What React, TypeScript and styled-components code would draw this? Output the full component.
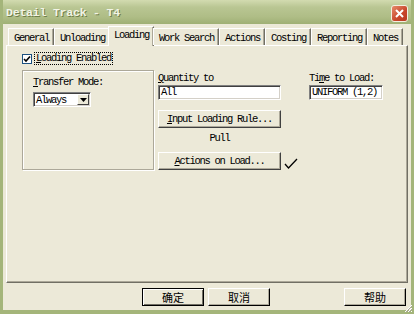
import React from "react";
import styled, { createGlobalStyle } from "styled-components";

const GlobalStyle = createGlobalStyle`
  html, body {
    margin: 0;
    padding: 0;
    background: #ece9d8;
  }
`;

const MONO = `"Liberation Mono", "DejaVu Sans Mono", monospace`;
const CJK = `"Noto Sans CJK SC", "Noto Sans", sans-serif`;

const Window = styled.div`
  width: 414px;
  height: 314px;
  box-sizing: border-box;
  display: flex;
  flex-direction: column;
  background: #ece9d8;
  border-left: 3px solid #a4b57a;
  border-right: 3px solid #a4b57a;
  border-bottom: 4px solid #a4b57a;
  font-family: ${MONO};
  font-size: 10.5px;
  letter-spacing: -1.3px;
  color: #000;
  overflow: hidden;
`;

const TitleBar = styled.div`
  height: 24px;
  margin: 0 -3px;
  padding: 0 6px 0 6px;
  display: flex;
  align-items: center;
  justify-content: space-between;
  background: linear-gradient(#d2dbb0 0%, #b9c693 30%, #afbd86 70%, #9fb075 100%);
`;

const Title = styled.span`
  font-family: ${MONO};
  font-weight: bold;
  font-size: 11.5px;
  letter-spacing: -0.2px;
  color: #f2f4e6;
  text-shadow: 1px 1px 0 #6f7e4a;
`;

const CloseButton = styled.div`
  width: 17px;
  height: 17px;
  margin-top: 2px;
  box-sizing: border-box;
  border: 1px solid #f3eee0;
  border-radius: 3px;
  background: linear-gradient(135deg, #e68a6a, #c8452a 60%, #b83a22);
  display: flex;
  align-items: center;
  justify-content: center;
`;

const Body = styled.div`
  flex: 1;
  display: flex;
  flex-direction: column;
  padding: 3px 3px 0 3px;
`;

const TabRow = styled.div`
  display: flex;
  align-items: flex-end;
  height: 18px;
  padding-left: 2px;
  position: relative;
  z-index: 1;
`;

const Tab = styled.div<{ $active?: boolean }>`
  box-sizing: border-box;
  height: ${({ $active }) => ($active ? "20px" : "17px")};
  padding: ${({ $active }) => ($active ? "2px 4px 0 5px" : "3px 4px 0 5px")};
  margin: ${({ $active }) => ($active ? "0 -1px -1px -2px" : "0")};
  background: #ece9d8;
  border-top: 1px solid #fff;
  border-left: 1px solid #fff;
  border-right: 1px solid #716f64;
  box-shadow: inset -1px 0 0 #aca899;
  white-space: nowrap;
  line-height: 12px;
`;

const Panel = styled.div`
  height: 238px;
  box-sizing: border-box;
  border-top: 1px solid #fff;
  border-left: 1px solid #fff;
  border-right: 1px solid #716f64;
  border-bottom: 1px solid #716f64;
  box-shadow: inset -1px -1px 0 #aca899;
  padding: 6px 0 0 15px;
`;

const CheckRow = styled.div`
  display: flex;
  align-items: center;
  gap: 3px;
  height: 13px;
`;

const CheckBox = styled.div`
  width: 10px;
  height: 10px;
  box-sizing: border-box;
  border: 1px solid #1c5180;
  background: #fff;
  display: flex;
  align-items: center;
  justify-content: center;
`;

const FocusLabel = styled.span`
  padding: 0 1px;
  outline: 1px dotted #000;
  line-height: 11px;
`;

const U = styled.span`
  text-decoration: underline;
`;

const Columns = styled.div`
  display: flex;
  margin-top: 5px;
`;

const GroupBox = styled.div`
  width: 132px;
  height: 100px;
  box-sizing: border-box;
  border: 1px solid #aca899;
  box-shadow: 1px 1px 0 #fff, inset 1px 1px 0 #fff;
  padding: 5px 0 0 10px;
`;

const Label = styled.div`
  line-height: 12px;
  height: 12px;
`;

const Combo = styled.div`
  margin-top: 4px;
  width: 58px;
  height: 15px;
  box-sizing: border-box;
  background: #fff;
  border-top: 1px solid #808080;
  border-left: 1px solid #808080;
  border-right: 1px solid #fff;
  border-bottom: 1px solid #fff;
  box-shadow: inset 1px 1px 0 #404040, inset -1px -1px 0 #d4d0c8;
  display: flex;
  align-items: center;
  justify-content: space-between;
  padding: 0 1px 0 2px;
`;

const ComboArrow = styled.div`
  width: 12px;
  height: 11px;
  box-sizing: border-box;
  background: #ece9d8;
  border-top: 1px solid #fff;
  border-left: 1px solid #fff;
  border-right: 1px solid #404040;
  border-bottom: 1px solid #404040;
  display: flex;
  align-items: center;
  justify-content: center;
`;

const Column = styled.div<{ $width: number; $left: number }>`
  width: ${({ $width }) => $width}px;
  margin-left: ${({ $left }) => $left}px;
  display: flex;
  flex-direction: column;
  padding-top: 2px;
`;

const TextBox = styled.div`
  margin-top: 1px;
  height: 15px;
  box-sizing: border-box;
  background: #fff;
  border-top: 1px solid #808080;
  border-left: 1px solid #808080;
  border-right: 1px solid #fff;
  border-bottom: 1px solid #fff;
  box-shadow: inset 1px 1px 0 #404040, inset -1px -1px 0 #d4d0c8;
  padding: 0 2px;
  line-height: 13px;
  white-space: nowrap;
`;

const RaisedButton = styled.div`
  height: 18px;
  box-sizing: border-box;
  background: #ece9d8;
  border-top: 1px solid #fff;
  border-left: 1px solid #fff;
  border-right: 1px solid #404040;
  border-bottom: 1px solid #404040;
  box-shadow: inset -1px -1px 0 #aca899;
  display: flex;
  align-items: center;
  justify-content: center;
  white-space: nowrap;
`;

const RuleButton = styled(RaisedButton)`
  margin-top: 10px;
`;

const PullText = styled.div`
  text-align: center;
  line-height: 12px;
  margin-top: 4px;
  height: 12px;
`;

const ActionRow = styled.div`
  display: flex;
  align-items: flex-end;
  margin-top: 8px;
  width: 150px;
`;

const ActionButton = styled(RaisedButton)`
  width: 123px;
  flex: none;
`;

const CheckMark = styled.svg`
  flex: none;
  margin-left: 3px;
`;

const Footer = styled.div`
  display: flex;
  justify-content: flex-end;
  align-items: center;
  height: 27px;
  padding-right: 2px;
`;

const DialogButton = styled.div<{ $default?: boolean; $gap?: number }>`
  width: 62px;
  height: 18px;
  margin-left: ${({ $gap }) => $gap ?? 4}px;
  box-sizing: border-box;
  background: #ece9d8;
  font-family: ${CJK};
  font-size: 11px;
  letter-spacing: 0;
  display: flex;
  align-items: center;
  justify-content: center;
  border-top: 1px solid ${({ $default }) => ($default ? "#000" : "#fff")};
  border-left: 1px solid ${({ $default }) => ($default ? "#000" : "#fff")};
  border-right: 1px solid #000;
  border-bottom: 1px solid #000;
  box-shadow: ${({ $default }) =>
    $default
      ? "inset 1px 1px 0 #fff, inset -1px -1px 0 #716f64"
      : "inset -1px -1px 0 #aca899"};
`;

const Grip = styled.svg`
  position: absolute;
  right: 1px;
  bottom: 1px;
`;

const Frame = styled.div`
  position: relative;
`;

const tabs = ["General", "Unloading", "Loading", "Work Search", "Actions", "Costing", "Reporting", "Notes"];

export default function App() {
  return (
    <Frame>
      <GlobalStyle />
      <Window>
        <TitleBar>
          <Title>Detail Track - T4</Title>
          <CloseButton>
            <svg width="9" height="9" viewBox="0 0 9 9">
              <path d="M1 1L8 8M8 1L1 8" stroke="#fff" strokeWidth="2" />
            </svg>
          </CloseButton>
        </TitleBar>
        <Body>
          <TabRow>
            {tabs.map((t) => (
              <Tab key={t} $active={t === "Loading"}>
                {t}
              </Tab>
            ))}
          </TabRow>
          <Panel>
            <CheckRow>
              <CheckBox>
                <svg width="8" height="8" viewBox="0 0 8 8">
                  <path d="M1 4L3 6L7 1.5" stroke="#000" strokeWidth="1.6" fill="none" />
                </svg>
              </CheckBox>
              <FocusLabel>
                <U>L</U>oading Enabled
              </FocusLabel>
            </CheckRow>
            <Columns>
              <GroupBox>
                <Label>
                  <U>T</U>ransfer Mode:
                </Label>
                <Combo>
                  <span>Always</span>
                  <ComboArrow>
                    <svg width="7" height="4" viewBox="0 0 7 4">
                      <path d="M0 0H7L3.5 4Z" fill="#000" />
                    </svg>
                  </ComboArrow>
                </Combo>
              </GroupBox>
              <Column $width={123} $left={4}>
                <Label>
                  <U>Q</U>uantity to
                </Label>
                <TextBox>All</TextBox>
                <RuleButton>
                  <span>
                    <U>I</U>nput Loading Rule...
                  </span>
                </RuleButton>
                <PullText>Pull</PullText>
                <ActionRow>
                  <ActionButton>
                    <span>
                      <U>A</U>ctions on Load...
                    </span>
                  </ActionButton>
                  <CheckMark width="14" height="12" viewBox="0 0 14 12">
                    <path d="M1 6L4.5 10L13 1" stroke="#000" strokeWidth="1.3" fill="none" />
                  </CheckMark>
                </ActionRow>
              </Column>
              <Column $width={74} $left={28}>
                <Label>
                  Ti<U>m</U>e to Load:
                </Label>
                <TextBox>UNIFORM (1,2)</TextBox>
              </Column>
            </Columns>
          </Panel>
          <Footer>
            <DialogButton $default>确定</DialogButton>
            <DialogButton>取消</DialogButton>
            <DialogButton $gap={74}>帮助</DialogButton>
          </Footer>
        </Body>
      </Window>
      <Grip width="9" height="9" viewBox="0 0 9 9">
        <path d="M8 1L1 8M8 4L4 8M8 7L7 8" stroke="#fff" strokeWidth="1" />
        <path d="M8 2L2 8M8 5L5 8" stroke="#aca899" strokeWidth="1" />
      </Grip>
    </Frame>
  );
}
